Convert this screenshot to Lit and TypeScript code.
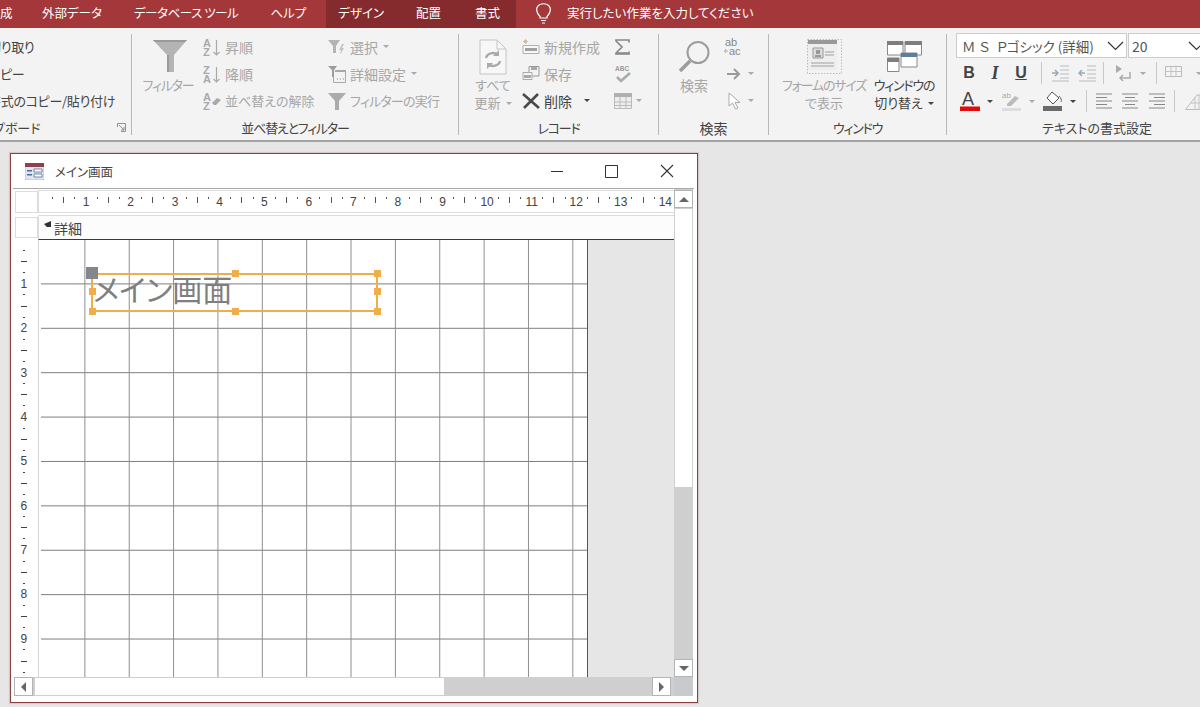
import { LitElement, html, svg, css } from 'lit';
import { customElement } from 'lit/decorators.js';

const GREY = '#a9a9a9';
const DARK = '#444';

const icon = (w: number, h: number, body: unknown) =>
  html`<svg width=${w} height=${h} viewBox="0 0 ${w} ${h}" fill="none">${body}</svg>`;

const label = (x: number, y: number, t: string, size = 9, fill = GREY, weight = 700) =>
  svg`<text x=${x} y=${y} font-family="Liberation Sans" font-size=${size} font-weight=${weight} fill=${fill}>${t}</text>`;

const icons = {
  funnelBig: icon(34, 33, svg`<path d="M0 0H34L21 15V32H14V15Z" fill="#b4b4b4"/><path d="M0 0H34L32 2H2Z" fill="#9a9a9a"/><path d="M14 15h2v17h-2z" fill="#9a9a9a"/>`),
  sortAsc: icon(18, 20, svg`${label(0, 9.500, 'A', 11)}${label(0, 19, 'Z', 11)}<path d="M13.500 3V18M10.500 15l3 3 3-3" stroke=${GREY} stroke-width="1.200"/>`),
  sortDesc: icon(18, 20, svg`${label(0, 9.500, 'Z', 11)}${label(0, 19, 'A', 11)}<path d="M13.500 3V18M10.500 15l3 3 3-3" stroke=${GREY} stroke-width="1.200"/>`),
  sortClear: icon(18, 20, svg`${label(0, 9.500, 'A', 11)}${label(0, 19, 'Z', 11)}<path d="M9 12l5-5 4 2-5 5h-2z" fill=${GREY}/>`),
  select: icon(18, 18, svg`<path d="M0 2H12L8 8V15H5V8Z" fill="#b4b4b4"/><path d="M14 6l-3 6h2l-1 5 4-7h-2l2-4z" fill="#c4c4c4"/>`),
  advanced: icon(18, 18, svg`<path d="M0 1H9L6 5V12H4V5Z" fill="#9c9c9c"/><path d="M7 5.500H17.500V17.500H5.500V12" stroke=${GREY}/><path d="M7 5h11v2H7z" fill=${GREY}/><path d="M9 14h1M12 14h1M15 14h1" stroke="#888"/>`),
  apply: icon(18, 18, svg`<path d="M0 1H18L11 9V18H7V9Z" fill="#ababab"/>`),
  refresh: icon(28, 36, svg`<path d="M1 1H18L27 10V35H1Z" fill="#f7f7f7" stroke="#c4c4c4"/><path d="M18 1V10H27" stroke="#c4c4c4"/><path d="M7 19a7 6 0 0 1 12-3M21 22a7 6 0 0 1-12 3" stroke="#aaa" stroke-width="2.400"/><path d="M20 11v6h-6zM8 30v-6h6z" fill="#aaa"/>`),
  newRec: icon(18, 16, svg`<path d="M2 1l3 3M5 1L2 4M1 2.500h5M3.500 0v5" stroke="#c9b48e" stroke-width=".8"/><path d="M1 6.500H17V14.500H1Z" stroke="#b0b0b0" fill="#f8f8f8"/><path d="M3 9h12v3H3z" fill="#a0a0a0"/>`),
  save: icon(18, 16, svg`<path d="M7 .5H17V10H7Z" stroke="#999"/><path d="M9 1h6v3H9z" fill="#a8a8a8"/><path d="M1 6.500H10V13.500H1Z" fill="#f5f5f5" stroke="#aaa"/><path d="M2 9h7v3H2z" fill="#aaa"/>`),
  del: icon(18, 16, svg`<path d="M1 1L17 15M16 1L2 15" stroke="#4a4a4a" stroke-width="2.600"/>`),
  sigma: icon(16, 16, svg`<path d="M15 3.500V1H2V2L8 8 2 14V15H15V12.500M3 14H14" stroke="#888" stroke-width="1.700"/>`),
  spell: icon(18, 20, svg`${label(1, 7, 'ABC', 6.500, '#999')}<path d="M3 13l4 4 9-8" stroke="#aaa" stroke-width="2.600"/>`),
  grid: icon(18, 16, svg`<path d="M.5 .5H17.500V15.500H.5Z" fill="#eee" stroke="#bbb"/><path d="M0 0h18v4H0z" fill="#b0b0b0"/><path d="M1 9h16M1 12.500h16M6 4v11M12 4v11" stroke="#bbb"/>`),
  magnifier: icon(33, 33, svg`<circle cx="20" cy="12.500" r="10.500" stroke="#9c9c9c" stroke-width="2"/><path d="M12 21L2 31" stroke="#9c9c9c" stroke-width="3.500"/>`),
  replace: icon(18, 18, svg`${label(1, 8, 'ab', 11, '#888', 400)}${label(5, 17, 'ac', 11, '#888', 400)}<path d="M1 13h3M2 11L0.500 13 2 15" stroke="#999" stroke-width=".8"/>`),
  goto: icon(16, 14, svg`<path d="M1 7H13M8 2l5 5-5 5" stroke="#9a9a9a" stroke-width="2"/>`),
  cursor: icon(14, 18, svg`<path d="M1 1V14L4.500 11 7.500 17 10 16 7 10.500H12Z" fill="#fff" stroke="#aaa"/>`),
  formThumb: icon(35, 35, svg`<path d="M.5 .5H34.500V34.500H.5Z" stroke="#bbb" stroke-dasharray="1.500 1.500"/><path d="M1 1H30V31H1Z" fill="#eee"/><path d="M1 1h29v4H1z" fill="#999"/><path d="M6 9H16V19H6Z" fill="#ddd" stroke="#999"/><path d="M9 11h4v4H9zM8 16h6v2H8z" fill="#999"/><path d="M18 13h9M18 16h9M4 24h23M4 27h23" stroke="#bbb" stroke-width="1.500"/>`),
  windows: icon(35, 31, svg`<path d="M.5 .5H16V14H.5ZM18 .5H34.500V14H18ZM14 12H30V26H14ZM.5 17H12V30.500H.5Z" fill="#fff" stroke="#888"/><path d="M0 0h16v4H0zM18 0h17v4H18zM0 17h12v4H0z" fill="#7e7e7e"/><path d="M14 12h16v4H14z" fill="#5d7f9e"/>`),
  indentIn: icon(18, 18, svg`<path d="M1 9H6M4 6l3 3-3 3" stroke="#9ab" stroke-width="1.500"/><path d="M9 2h9M9 6h9M9 10h9M9 14h9M1 17h17" stroke="#bbb"/>`),
  indentOut: icon(18, 18, svg`<path d="M7 9H2M4 6L1 9l3 3" stroke="#9ab" stroke-width="1.500"/><path d="M9 2h9M9 6h9M9 10h9M9 14h9M1 17h17" stroke="#bbb"/>`),
  rtl: icon(18, 18, svg`<path d="M1 1l6 4-6 4z" fill="#aaa"/><path d="M15 8V14H5M8 11l-3 3 3 3" stroke="#aaa" stroke-width="1.500"/>`),
  tableSmall: icon(26, 16, svg`<path d="M.5 1.500H16.500V11.500H.5Z" fill="#f4f4f4" stroke="#bbb"/><path d="M1 6.500h15M6 2v9M11 2v9" stroke="#c4c4c4"/>`),
  fontColor: icon(20, 20, svg`${label(2, 14, 'A', 18, DARK, 400)}<path d="M0 15.500h20v4.500H0z" fill="#e00b0b"/>`),
  highlight: icon(19, 20, svg`${label(0, 7, 'ab', 8, '#aaa', 400)}<path d="M5 13l8-8 4 2-8 8H5z" fill="#bbb"/><path d="M0 17h19v3H0z" fill="#ddd"/>`),
  fill: icon(20, 20, svg`<path d="M9 1l7 6-6 6-6-6z" fill="#fff" stroke="#555"/><path d="M16 5c2 2 3 4 2 6" stroke="#666"/><path d="M0 15h19v5H0z" fill="#6a6a6a"/>`),
  alignLeft: icon(16, 16, svg`<path d="M0 1h16M0 4.500h11M0 8h16M0 11.500h11M0 15h16" stroke="#888"/>`),
  alignCenter: icon(16, 16, svg`<path d="M0 1h16M3 4.500h10M0 8h16M3 11.500h10M0 15h16" stroke="#888"/>`),
  alignRight: icon(16, 16, svg`<path d="M0 1h16M5 4.500h11M0 8h16M5 11.500h11M0 15h16" stroke="#888"/>`),
  gridlines: icon(18, 18, svg`<path d="M.5 17.500L12 3H17.500V17.500Z" fill="#f3f3f3" stroke="#bbb"/><path d="M6 11h12M10 5v13M14 3v15" stroke="#c4c4c4"/>`),
  launcher: icon(9, 9, svg`<path d="M.5 4V.5H8.500V8.500H4M2 2L7 7M4 7H7V4" stroke="#777" stroke-width=".8"/>`),
  chevron: icon(17, 10, svg`<path d="M1 1L8.500 8.500 16 1" stroke="#333" stroke-width="1.200"/>`),
  bulb: icon(18, 22, svg`<path d="M5 14.500C1 11 1 6 3 4 5 1 12 1 14 4 16 6 16 11 12 14.500V16H5ZM6 18.500h5M7 21h3" stroke="#fff" stroke-width="1.200"/>`),
  formIcon: icon(19, 17, svg`<path d="M0 0H19V17H0Z" fill="#dfe6ef" stroke="#9aa6b8" stroke-width=".6"/><path d="M0 0h19v4H0z" fill="#8f3f52"/><path d="M2 7h5v1.500H2zM2 11h5v1.500H2z" fill="#4f6f9b"/><path d="M9 6h8v3H9zM9 11h8v3H9z" fill="#fff" stroke="#4f6f9b" stroke-width=".8"/>`),
  min: icon(12, 14, svg`<path d="M0 7.500h12" stroke="#333"/>`),
  max: icon(13, 13, svg`<path d="M.5 .5h12v12H.5z" stroke="#333"/>`),
  close: icon(14, 14, svg`<path d="M1 1l12 12M13 1L1 13" stroke="#333" stroke-width="1.100"/>`),
};

const CELLS = 14;
const V_CELLS = 10;

@customElement('app-root')
export class AppRoot extends LitElement {
  static styles = css`
    :host {
      display: block;
      font-family: 'Noto Sans CJK JP', 'Liberation Sans', sans-serif;
      font-feature-settings: 'palt';
      font-size: 13px;
      color: #444;
    }
    svg { display: block; flex: none; }
    .page {
      width: 1200px;
      height: 707px;
      overflow: hidden;
      background: #e6e6e6;
    }

    /* tabs */
    .tabs {
      display: flex;
      align-items: stretch;
      height: 28px;
      background: #a4373a;
      color: #fff;
      white-space: nowrap;
      line-height: 20px;
      font-size: 12.500px;
      margin-left: -16px;
    }
    .tab {
      display: flex;
      align-items: center;
      padding: 0 16px 3px;
    }
    .tab.on { background: #852b2e; }
    .tab.first { width: 42px; box-sizing: border-box; padding: 0 0 3px 16px; }
    .tab.db { letter-spacing: -.45px; }
    .tab.help { padding-right: 20px; }
    .tab.design { padding-left: 12px; }
    .tab.fmt-tab { padding-left: 18px; }
    .tell {
      display: flex;
      align-items: center;
      gap: 14px;
      padding: 0 0 3px 19px;
    }

    /* ribbon */
    .ribbon {
      display: flex;
      height: 112px;
      background: #f3f3f3;
      border-bottom: 2px solid #a3a3a3;
      white-space: nowrap;
    }
    .group {
      flex: none;
      box-sizing: border-box;
      height: 101px;
      margin-top: 6px;
      border-right: 1.500px solid #b9b9b9;
      display: flex;
      flex-direction: column;
    }
    .g-clip { width: 262px; margin-left: -130px; }
    .g-sort { width: 327px; }
    .g-rec { width: 200px; }
    .g-find { width: 110px; }
    .g-win { width: 178px; }
    .g-text { width: 300px; border-right: 0; }
    .body { height: 87px; display: flex; align-items: flex-start; }
    .g-clip .body { padding-left: 118px; letter-spacing: -.3px; }
    .g-sort .body { padding-left: 11px; }
    .g-rec .body { padding-left: 15px; }
    .g-find .body { padding-left: 19px; }
    .g-win .body { padding-left: 11px; }
    .cap {
      height: 14px;
      line-height: 14px;
      margin-top: 1px;
      text-align: center;
      color: #444;
      position: relative;
    }
    .launch { position: absolute; right: 5px; top: 2px; }
    .kana { letter-spacing: -1.200px; }
    .kana-s { letter-spacing: -.8px; }
    .k { font-size: 14px; }
    .rows { display: flex; flex-direction: column; margin-top: -1px; }
    .row {
      display: flex;
      align-items: center;
      height: 27px;
      gap: 4px;
    }
    .off { color: #a6a6a6; }
    .dark { color: #444; }
    .big {
      display: flex;
      flex-direction: column;
      align-items: center;
      line-height: 18px;
      text-align: center;
    }
    .big .pic {
      height: 42px;
      display: flex;
      align-items: center;
      padding-top: 3px;
      box-sizing: border-box;
    }
    .with-caret { display: inline-flex; align-items: center; gap: 5px; }
    .caret {
      flex: none;
      width: 0;
      height: 0;
      border-left: 3px solid transparent;
      border-right: 3px solid transparent;
      border-top: 3px solid #aaa;
    }
    .caret.dk { border-top-color: #444; }
    .sort-big { width: 50px; margin-right: 10px; }
    .sort-big .pic { padding-left: 3px; padding-top: 2px; }
    .sort-a { width: 125px; }
    .rec-big { width: 38px; margin-right: 10px; }
    .rec-a { width: 92px; }
    .find-big { width: 32px; margin-right: 14px; }
    .find-col .row { gap: 6px; }
    .m2 { margin-left: 2px; }
    .m4 { margin-left: 4px; }
    .win-a { width: 88px; margin-right: 6px; }
    .win-b { width: 60px; color: #444; }
    .del-gap { gap: 12px; }

    /* text formatting */
    .fmt { padding-left: 9px; display: flex; flex-direction: column; }
    .selects { display: flex; gap: 1px; height: 25px; margin-top: -1px; margin-bottom: 1px; }
    .select {
      flex: none;
      box-sizing: border-box;
      display: flex;
      align-items: center;
      justify-content: space-between;
      background: #fff;
      border: 1px solid #ccc;
      padding: 0 2px 0 5px;
      font-size: 14px;
      color: #555;
    }
    .select.font { width: 171px; font-size: 13.500px; }
    .select.size { width: 80px; padding-left: 3px; }
    .wide { letter-spacing: 4px; }
    .tools { display: flex; align-items: center; height: 28px; }
    .tool { width: 26px; display: flex; justify-content: center; align-items: center; flex: none; }
    .sep { width: 1px; height: 22px; background: #c9c9c9; flex: none; }
    .b, .i, .u { font-family: 'Liberation Sans', sans-serif; font-size: 16px; color: #444; font-weight: 700; }
    .i { font-style: italic; font-family: 'Liberation Serif', serif; font-size: 18px; }
    .u { text-decoration: underline; }
    .s3 { margin-left: 3px; }
    .s4 { margin-left: 4px; }
    .s5 { margin-left: 5px; }
    .s6 { margin-left: 6px; }
    .s7 { margin-left: 7px; }
    .s8 { margin-left: 8px; }
    .s9 { margin-left: 9px; }
    .s10 { margin-left: 10px; }
    .s11 { margin-left: 11px; }
    .t27 { width: 27px; }
    .t20 { width: 20px; flex: none; }

    /* mdi window */
    .window {
      margin: 11px 0 0 10px;
      width: 688px;
      height: 550px;
      box-sizing: border-box;
      background: #fff;
      border: 1.500px solid #8e3f43;
      box-shadow: 0 0 1px 1px #d6c8c8;
      display: flex;
      flex-direction: column;
    }
    .title {
      flex: none;
      height: 34px;
      margin: 0 3px 0 2px;
      border-bottom: 1px solid #a9a9a9;
      display: flex;
      align-items: center;
      padding-left: 12px;
      gap: 11px;
      color: #444;
      font-size: 12.500px;
    }
    .title .name { flex: 1; }
    .btns { display: flex; }
    .btn { width: 55px; height: 34px; display: flex; align-items: center; justify-content: center; }
    .sheet {
      display: grid;
      grid-template-columns: 660px 19px;
      grid-template-rows: 488px 19px;
      margin-left: 3px;
    }
    .inner {
      display: grid;
      grid-template-columns: 26.500px 633.500px;
      grid-template-rows: 26px 25px 437px;
      overflow: hidden;
    }
    .corner {
      margin: 2px 3px 2px 1px;
      border: 1.500px solid #dcdcdc;
      box-sizing: border-box;
    }
    .hruler {
      display: flex;
      margin: 1px 0 2px -2.500px;
      padding-left: 8px;
      align-items: center;
      border: 1.500px solid #dcdcdc;
      border-right: 0;
      overflow: hidden;
    }
    .slot {
      flex: none;
      width: 11.150px;
      display: flex;
      align-items: center;
      justify-content: center;
      font: 12px 'Liberation Sans', sans-serif;
      color: #444;
    }
    .t-s { width: 1px; height: 2px; background: #555; margin-bottom: 8px; }
    .t-l { width: 1px; height: 6px; background: #555; margin-bottom: 4px; }
    .band {
      border-bottom: 1.500px solid #3a3a3a;
      margin-left: -2.500px;
      border-left: 1.500px solid #dcdcdc;
      border-top: 1.500px solid #dcdcdc;
      background: #fcfcfc;
      display: flex;
      align-items: center;
      padding-left: 15px;
      position: relative;
      line-height: 20px;
      font-size: 14px;
    }
    .mark {
      position: absolute;
      left: 5px;
      top: 5px;
      width: 7px;
      height: 6px;
      background: #333;
      clip-path: polygon(0 50%, 100% 0, 100% 100%, 40% 100%);
    }
    .vruler {
      margin: 0 2px 0 1px;
      border-right: 1.500px solid #d6d6d6;
      padding: 5px 5px 0 0;
      display: flex;
      flex-direction: column;
      overflow: hidden;
    }
    .vslot {
      flex: none;
      height: 11.100px;
      display: flex;
      align-items: center;
      justify-content: center;
      font: 12px 'Liberation Sans', sans-serif;
      color: #444;
    }
    .v-s { width: 2px; height: 1px; background: #444; }
    .v-l { width: 6px; height: 1px; background: #444; }
    .canvas { display: flex; background: #e6e6e6; }
    .form {
      flex: none;
      position: relative;
      width: 547px;
      box-sizing: border-box;
      border-right: 1.500px solid #555;
      background-color: #fff;
      background-image:
        linear-gradient(to right, transparent 42.900px, #8e8e8e 42.900px),
        linear-gradient(to bottom, transparent 43.200px, #7c7c7c 43.200px);
      background-size: 44.360px 44.400px;
    }
    .ctl {
      position: absolute;
      left: 50.500px;
      top: 32.500px;
      width: 286.500px;
      height: 39px;
      box-sizing: border-box;
      border: 2.500px solid #f0ae4b;
      font-size: 30px;
      line-height: 27px;
      color: #7f7f7f;
      white-space: nowrap;
    }
    .h {
      position: absolute;
      width: 7px;
      height: 7px;
      background: #f0ae4b;
    }
    .h.tm { left: 139px; top: -5px; }
    .h.tr { right: -5px; top: -5px; }
    .h.ml { left: -4px; top: 13px; }
    .h.mr { right: -5px; top: 13px; }
    .h.bl { left: -4px; bottom: -5px; }
    .h.bm { left: 139px; bottom: -5px; }
    .h.br { right: -5px; bottom: -5px; }
    .h.mv { left: -7px; top: -8px; width: 12px; height: 12px; background: #83868c; }

    /* scrollbars */
    .vbar { display: flex; flex-direction: column; background: #cfcfcf; padding-top: 1px; }
    .sb {
      flex: none;
      box-sizing: border-box;
      background: #fff;
      border: 1.500px solid #b4b4b4;
      display: flex;
      align-items: center;
      justify-content: center;
    }
    .vbar .sb { height: 18px; }
    .vthumb { height: 280px; flex: none; box-sizing: border-box; background: #fff; border: 1.500px solid #cfcfcf; }
    .fill { flex: 1; }
    .up, .down, .left, .right { width: 0; height: 0; border: 5px solid transparent; }
    .up { border-bottom-color: #666; border-top-width: 0; }
    .down { border-top-color: #666; border-bottom-width: 0; }
    .left { border-right-color: #666; border-left-width: 0; }
    .right { border-left-color: #666; border-right-width: 0; }
    .hbar { display: flex; background: #cfcfcf; }
    .hbar .sb { width: 19px; }
    .hthumb { width: 411px; flex: none; box-sizing: border-box; margin-left: 1px; background: #fff; border: 1.500px solid #cfcfcf; }
    .rb { margin-right: 3px; }
    .gapbox { background: #c8cacd; }
  `;

  private rulerTop() {
    const cells = [];
    for (let n = 1; n <= CELLS; n++) {
      cells.push(html`<span class="slot"><i class="t-s"></i></span><span class="slot"><i class="t-l"></i></span><span class="slot"><i class="t-s"></i></span><span class="slot">${n}</span>`);
    }
    cells.push(html`<span class="slot"><i class="t-s"></i></span>`);
    return cells;
  }

  private rulerLeft() {
    const cells = [];
    for (let n = 1; n <= V_CELLS; n++) {
      cells.push(html`<span class="vslot"><i class="v-s"></i></span><span class="vslot"><i class="v-l"></i></span><span class="vslot"><i class="v-s"></i></span><span class="vslot">${n}</span>`);
    }
    return cells;
  }

  render() {
    return html`
      <div class="page">
        <div class="tabs">
          <div class="tab first">成</div>
          <div class="tab">外部データ</div>
          <div class="tab db">データベース ツール</div>
          <div class="tab help">ヘルプ</div>
          <div class="tab on design">デザイン</div>
          <div class="tab on">配置</div>
          <div class="tab on fmt-tab">書式</div>
          <div class="tell">${icons.bulb}<span>実行したい作業を入力してください</span></div>
        </div>

        <div class="ribbon">
          <div class="group g-clip">
            <div class="body">
              <div class="rows">
                <div class="row">切り取り</div>
                <div class="row">コピー</div>
                <div class="row">書式のコピー/貼り付け</div>
              </div>
            </div>
            <div class="cap">クリップボード<span class="launch">${icons.launcher}</span></div>
          </div>

          <div class="group g-sort">
            <div class="body off">
              <div class="big sort-big"><div class="pic">${icons.funnelBig}</div><span class="kana">フィルター</span></div>
              <div class="rows sort-a">
                <div class="row">${icons.sortAsc}<span class="k">昇順</span></div>
                <div class="row">${icons.sortDesc}<span class="k">降順</span></div>
                <div class="row">${icons.sortClear}並べ替えの解除</div>
              </div>
              <div class="rows">
                <div class="row">${icons.select}<span class="with-caret k">選択<i class="caret"></i></span></div>
                <div class="row">${icons.advanced}<span class="with-caret k">詳細設定<i class="caret"></i></span></div>
                <div class="row">${icons.apply}<span class="kana-s">フィルターの実行</span></div>
              </div>
            </div>
            <div class="cap"><span class="kana">並べ替えとフィルター</span></div>
          </div>

          <div class="group g-rec">
            <div class="body off">
              <div class="big rec-big">
                <div class="pic">${icons.refresh}</div>
                すべて
                <span class="with-caret">更新<i class="caret"></i></span>
              </div>
              <div class="rows rec-a">
                <div class="row">${icons.newRec}<span class="k">新規作成</span></div>
                <div class="row">${icons.save}<span class="k">保存</span></div>
                <div class="row del-gap">
                  <span class="row">${icons.del}<span class="k dark">削除</span></span>
                  <i class="caret dk"></i>
                </div>
              </div>
              <div class="rows">
                <div class="row">${icons.sigma}</div>
                <div class="row">${icons.spell}</div>
                <div class="row">${icons.grid}<i class="caret"></i></div>
              </div>
            </div>
            <div class="cap"><span class="kana">レコード</span></div>
          </div>

          <div class="group g-find">
            <div class="body off">
              <div class="big find-big"><div class="pic">${icons.magnifier}</div><span class="k">検索</span></div>
              <div class="rows find-col">
                <div class="row">${icons.replace}</div>
                <div class="row"><span class="m2">${icons.goto}</span><i class="caret"></i></div>
                <div class="row"><span class="m4">${icons.cursor}</span><i class="caret"></i></div>
              </div>
            </div>
            <div class="cap k">検索</div>
          </div>

          <div class="group g-win">
            <div class="body off">
              <div class="big win-a">
                <div class="pic">${icons.formThumb}</div>
                <span class="kana">フォームのサイズ</span>
                <span>で表示</span>
              </div>
              <div class="big win-b">
                <div class="pic">${icons.windows}</div>
                <span class="kana">ウィンドウの</span>
                <span class="with-caret">切り替え<i class="caret dk"></i></span>
              </div>
            </div>
            <div class="cap"><span class="kana">ウィンドウ</span></div>
          </div>

          <div class="group g-text">
            <div class="body fmt">
              <div class="selects">
                <div class="select font"><span><span class="wide">ＭＳ</span> Ｐゴシック (詳細)</span>${icons.chevron}</div>
                <div class="select size"><span>20</span>${icons.chevron}</div>
              </div>
              <div class="tools">
                <span class="tool b">B</span><span class="tool i">I</span><span class="tool u">U</span>
                <i class="sep s7"></i>
                <span class="tool t27 s4">${icons.indentIn}</span><span class="tool t27">${icons.indentOut}</span>
                <i class="sep s3"></i>
                <span class="tool t27 s6">${icons.rtl}</span><i class="caret s3"></i>
                <i class="sep s10"></i>
                <span class="tool s8">${icons.tableSmall}</span><i class="caret s5"></i>
              </div>
              <div class="tools">
                <span class="t20 s4">${icons.fontColor}</span><i class="caret dk s7"></i>
                <span class="t20 s9">${icons.highlight}</span><i class="caret s7"></i>
                <span class="t20 s8">${icons.fill}</span><i class="caret dk s7"></i>
                <i class="sep s10"></i>
                <span class="s9">${icons.alignLeft}</span>
                <span class="s10">${icons.alignCenter}</span>
                <span class="s11">${icons.alignRight}</span>
                <i class="sep s9"></i>
                <span class="s10">${icons.gridlines}</span>
              </div>
            </div>
            <div class="cap">テキストの書式設定</div>
          </div>
        </div>

        <div class="window">
          <div class="title">
            ${icons.formIcon}
            <span class="name">メイン画面</span>
            <div class="btns">
              <span class="btn">${icons.min}</span>
              <span class="btn">${icons.max}</span>
              <span class="btn">${icons.close}</span>
            </div>
          </div>
          <div class="sheet">
            <div class="inner">
              <div class="corner"></div>
              <div class="hruler">${this.rulerTop()}</div>
              <div class="corner"></div>
              <div class="band"><i class="mark"></i>詳細</div>
              <div class="vruler">${this.rulerLeft()}</div>
              <div class="canvas">
                <div class="form">
                  <div class="ctl">
                    メイン画面
                    <i class="h mv"></i><i class="h tm"></i><i class="h tr"></i>
                    <i class="h ml"></i><i class="h mr"></i>
                    <i class="h bl"></i><i class="h bm"></i><i class="h br"></i>
                  </div>
                </div>
              </div>
            </div>
            <div class="vbar">
              <div class="sb"><i class="up"></i></div>
              <div class="vthumb"></div>
              <div class="fill"></div>
              <div class="sb"><i class="down"></i></div>
            </div>
            <div class="hbar">
              <div class="sb"><i class="left"></i></div>
              <div class="hthumb"></div>
              <div class="fill"></div>
              <div class="sb rb"><i class="right"></i></div>
            </div>
            <div class="gapbox"></div>
          </div>
        </div>
      </div>
    `;
  }
}

declare global {
  interface HTMLElementTagNameMap {
    'app-root': AppRoot;
  }
}
